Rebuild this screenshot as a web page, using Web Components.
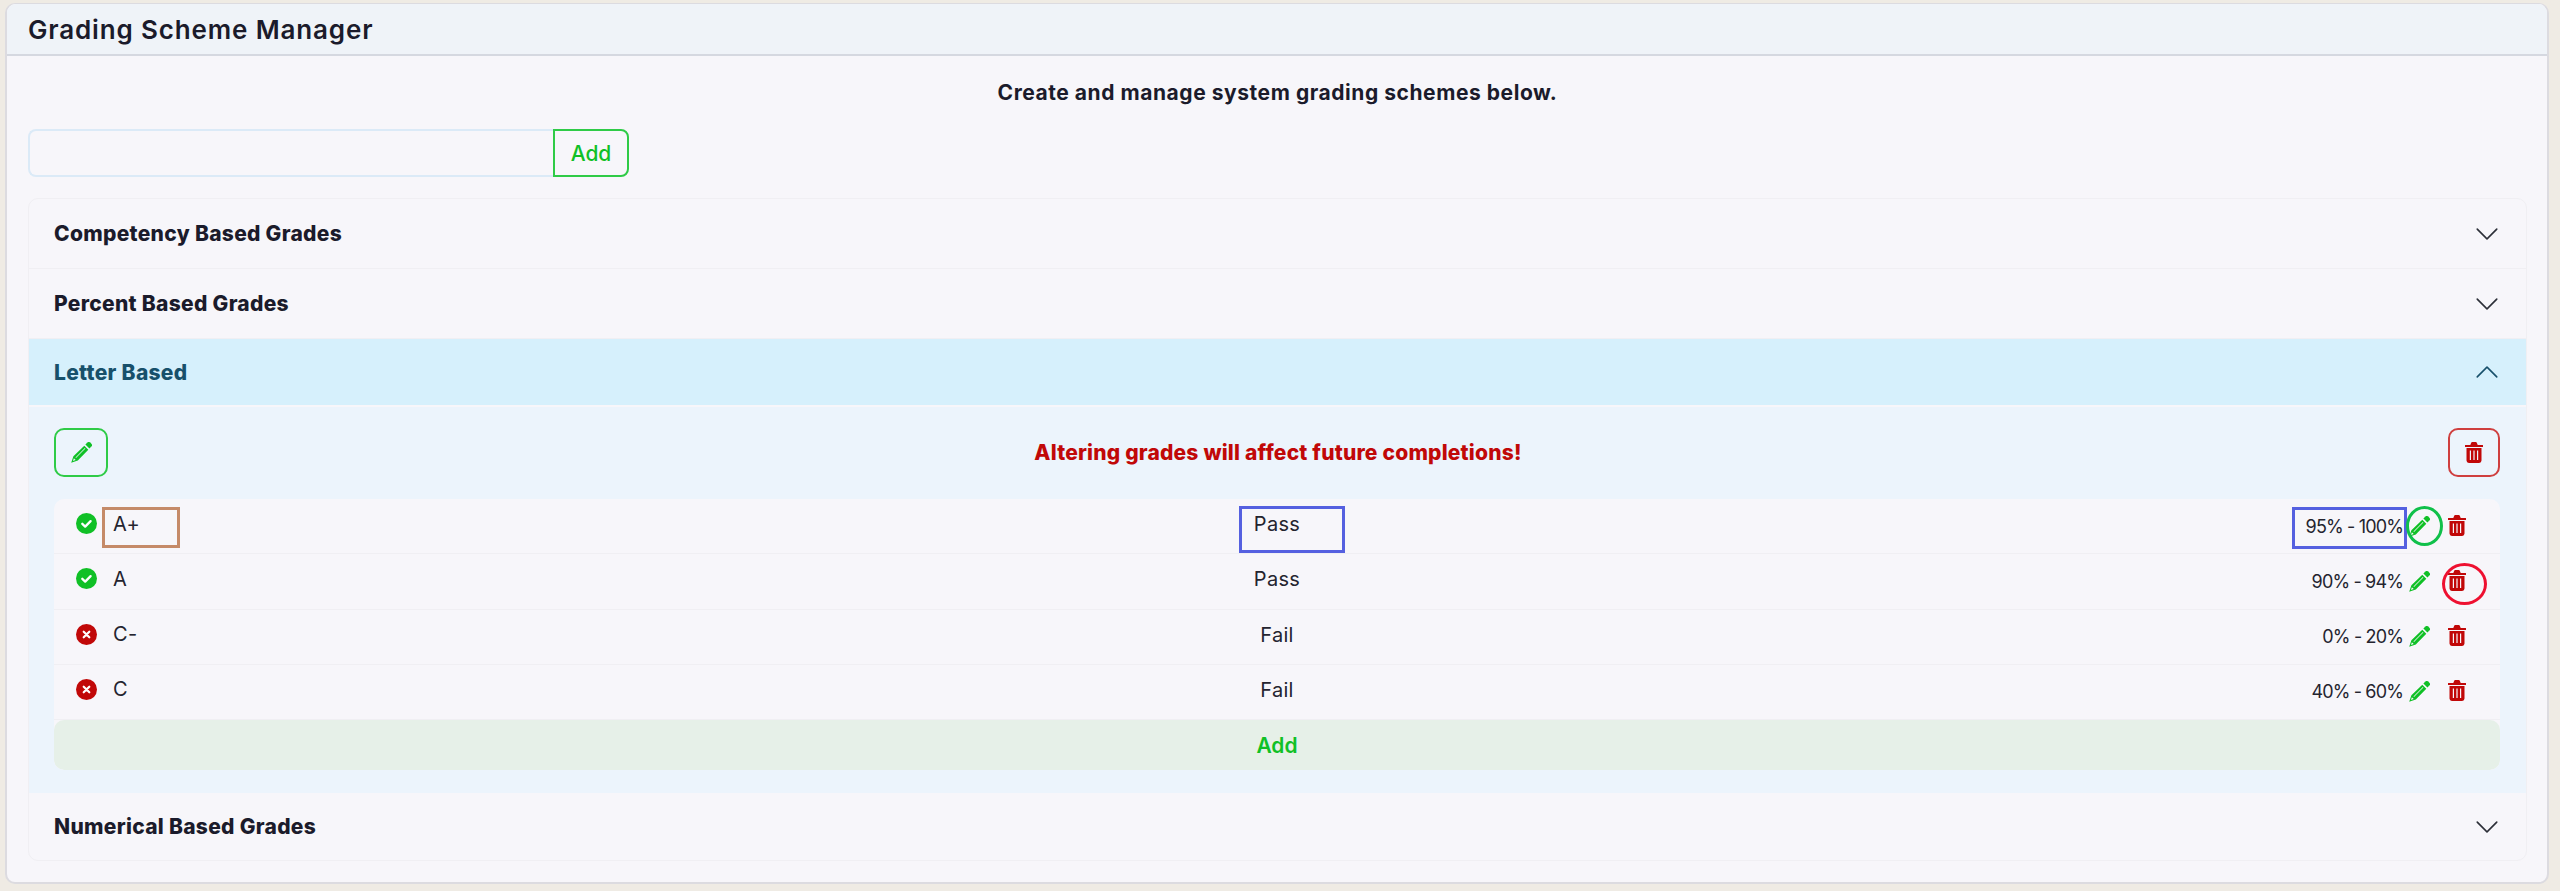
<!DOCTYPE html>
<html lang="en">
<head>
<meta charset="utf-8">
<title>Grading Scheme Manager</title>
<style>
  html, body { margin: 0; height: 100%; }
  body { background: #efebe4; font-family: Inter, "Liberation Sans", sans-serif; color: #1b1b2b; }
</style>
</head>
<body>
<grading-manager heading="Grading Scheme Manager" intro="Create and manage system grading schemes below.">
  <scheme-accordion>
    <scheme-item label="Competency Based Grades"></scheme-item>
    <scheme-item label="Percent Based Grades"></scheme-item>
    <scheme-item label="Letter Based" open warning="Altering grades will affect future completions!">
      <grade-row symbol="A+" status="Pass" range="95% - 100%" marks="symbol status range edit"></grade-row>
      <grade-row symbol="A" status="Pass" range="90% - 94%" marks="remove"></grade-row>
      <grade-row symbol="C-" status="Fail" range="0% - 20%"></grade-row>
      <grade-row symbol="C" status="Fail" range="40% - 60%"></grade-row>
    </scheme-item>
    <scheme-item label="Numerical Based Grades" last></scheme-item>
  </scheme-accordion>
</grading-manager>

<script>
const ICONS = {
  pencil: `<svg viewBox="0 0 21 21" width="21" height="21" fill="currentColor"><path d="M14.4 2.600 16.400.6a2 2 0 0 1 2.800 0l1.200 1.200a2 2 0 0 1 0 2.800l-2 2z"/><path fill-rule="evenodd" d="M13.300 3.700l4 4L6.800 18.600.2 20.800l2.200-6.600zM13.900 6 4.500 15.400l.5.500 9.400-9.400zM2.900 16.300l-1 2.800 2.800-1z"/></svg>`,
  trash: `<svg viewBox="0 0 18 21" width="18" height="21" fill="currentColor"><path d="M.3 3h5l1-2.4A1 1 0 0 1 7.200 0h3.600a1 1 0 0 1 .9.6l1 2.400h5a.3.3 0 0 1 .3.300V5H0V3.300A.3.300 0 0 1 .3 3z"/><path fill-rule="evenodd" d="M1.500 6h15v12.600a2.400 2.400 0 0 1-2.400 2.400H3.900a2.400 2.400 0 0 1-2.400-2.400zM4.800 8.500v9.500h1.200V8.500zM8.400 8.500v9.500h1.200V8.500zM12 8.500v9.500h1.200V8.500z"/></svg>`,
  check: `<svg viewBox="0 0 21 21" width="21" height="21"><circle cx="10.500" cy="10.500" r="10.500" fill="#10c026"/><path d="M6.300 10.800l2.900 2.800 5.400-5.500" fill="none" stroke="#fff" stroke-width="2.300" stroke-linecap="round" stroke-linejoin="round"/></svg>`,
  cross: `<svg viewBox="0 0 21 21" width="21" height="21"><circle cx="10.500" cy="10.500" r="10.500" fill="#c10808"/><path d="M7.700 7.700l5.600 5.600M13.300 7.700l-5.600 5.600" fill="none" stroke="#fff" stroke-width="2.200" stroke-linecap="round"/></svg>`,
  down: `<svg viewBox="0 0 16 16" width="26" height="26" fill="currentColor"><path fill-rule="evenodd" d="M1.646 4.646a.5.5 0 0 1 .708 0L8 10.293l5.646-5.647a.5.5 0 0 1 .708.708l-6 6a.5.5 0 0 1-.708 0l-6-6a.5.5 0 0 1 0-.708z"/></svg>`,
  up: `<svg viewBox="0 0 16 16" width="26" height="26" fill="currentColor" style="transform:rotate(180deg)"><path fill-rule="evenodd" d="M1.646 4.646a.5.5 0 0 1 .708 0L8 10.293l5.646-5.647a.5.5 0 0 1 .708.708l-6 6a.5.5 0 0 1-.708 0l-6-6a.5.5 0 0 1 0-.708z"/></svg>`
}

class GradingManager extends HTMLElement{
  constructor(){
    super()
    const shadow = this.attachShadow({ mode: "open" });
    shadow.innerHTML = `
      <style>
        :host { display: block; margin: 3px 11px 0 5px; background: #f7f6fa; border: 1px solid #dcdbe0; border-width: 1px 2px 2px 2px; border-radius: 10px; }
        header { height: 50px; padding-left: 21px; display: flex; align-items: center; background: #eff3f8; border-bottom: 2px solid #d5d8e0; border-radius: 9px 9px 0 0; font-size: 26px; font-weight: 600; letter-spacing: 0.85px; }
        main { padding: 0 20px 21px 21px; }
        p { margin: 0; height: 73px; display: flex; align-items: center; justify-content: center; font-size: 21px; font-weight: 700; letter-spacing: 0.55px; }
        form { display: flex; margin-bottom: 21px; }
        input { box-sizing: border-box; width: 525px; height: 48px; background: #f7f6fa; border: 2px solid #dbeaf7; border-right: none; border-radius: 8px 0 0 8px; outline: none; }
        button { box-sizing: border-box; width: 76px; height: 48px; padding: 0; background: transparent; border: 2px solid #2fcb47; border-radius: 0 8px 8px 0; color: #10c026; font: 500 21px Inter, "Liberation Sans", sans-serif; }
      </style>
      <header>${this.getAttribute('heading')}</header>
      <main>
        <p>${this.getAttribute('intro')}</p>
        <form><input type="text" aria-label="Scheme name"><button type="button">Add</button></form>
        <slot></slot>
      </main>
    `
  }
}
customElements.define('grading-manager', GradingManager)

class SchemeAccordion extends HTMLElement{
  constructor(){
    super()
    const shadow = this.attachShadow({ mode: "open" });
    shadow.innerHTML = `
      <style>
        :host { display: block; border: 1px solid #f0eff3; border-radius: 10px; overflow: hidden; }
      </style>
      <slot></slot>
    `
  }
}
customElements.define('scheme-accordion', SchemeAccordion)

class SchemeItem extends HTMLElement{
  constructor(){
    super()
    const shadow = this.attachShadow({ mode: "open" });
    const open = this.hasAttribute('open')
    const last = this.hasAttribute('last')
    shadow.innerHTML = `
      <style>
        :host { display: block; }
        .head { box-sizing: border-box; height: ${open ? 66 : last ? 67 : 70}px; padding: 0 26px 0 25px; display: flex; align-items: center; justify-content: space-between; font-size: 21px; font-weight: 800; letter-spacing: 0.3px; color: #1b1b2b; border-bottom: ${open || last ? 0 : 1}px solid #f0eff3; }
        .head svg { display: block; color: #2c2f38; }
        .head.open { background: #d6f0fc; color: #17506b; margin-bottom: 2px; }
        .head.open svg { color: #17506b; }
        .body { background: #ecf4fc; padding: 21px 26px 23px 25px; }
        .tools { display: flex; align-items: center; justify-content: space-between; margin-bottom: 22px; }
        .tool { box-sizing: border-box; height: 49px; display: flex; align-items: center; justify-content: center; border-radius: 10px; background: transparent; padding: 0; }
        .tool.edit { width: 54px; border: 2px solid #2fcb47; color: #10c026; }
        .tool.remove { width: 52px; border: 2px solid #cf3f3f; color: #c10808; }
        .warn { font-size: 21px; font-weight: 800; letter-spacing: 0.2px; color: #c10808; }
        .list { border-radius: 10px; overflow: hidden; background: #f7f6fa; }
        .add { height: 50px; display: flex; align-items: center; justify-content: center; background: #e6f0e8; color: #10c026; font-size: 21px; font-weight: 600; border-radius: 10px; }
      </style>
      <div class="head ${open ? 'open' : ''}">
        <span>${this.getAttribute('label')}</span>
        ${open ? ICONS.up : ICONS.down}
      </div>
      ${open ? `
      <div class="body">
        <div class="tools">
          <div class="tool edit">${ICONS.pencil}</div>
          <span class="warn">${this.getAttribute('warning')}</span>
          <div class="tool remove">${ICONS.trash}</div>
        </div>
        <div class="list">
          <slot></slot>
          <div class="add">Add</div>
        </div>
      </div>` : ''}
    `
  }
}
customElements.define('scheme-item', SchemeItem)

class GradeRow extends HTMLElement{
  constructor(){
    super()
    const shadow = this.attachShadow({ mode: "open" });
    const passed = this.getAttribute('status') === 'Pass'
    const marks = (this.getAttribute('marks') || '').split(' ').filter(Boolean)
    shadow.innerHTML = `
      <style>
        :host { display: block; }
        .row { position: relative; box-sizing: border-box; height: 55.25px; display: grid; grid-template-columns: 1fr auto 1fr; align-items: center; border-bottom: 1px solid #f0eff3; font-size: 20px; letter-spacing: 0.3px; color: #24242f; }
        .left { display: flex; align-items: center; padding: 0 0 5px 22px; gap: 16px; }
        .left svg, .right svg { display: block; }
        .status { position: relative; top: -2px; }
        .right { display: flex; align-items: center; justify-content: flex-end; font-size: 18px; letter-spacing: -0.85px; padding-right: 34px; }
        .pen { color: #10c026; margin: 0 18px 0 6px; }
        .bin { color: #c10808; padding-bottom: 2px; }
        /* review marks drawn over the row */
        .mark { position: absolute; box-sizing: border-box; border: 3px solid; }
        .mark.symbol { left: 48px; top: 8px; width: 78px; height: 41px; border-color: #c58a68; }
        .mark.status { left: 1185px; top: 7px; width: 106px; height: 47px; border-color: #5560e0; }
        .mark.range { right: 93px; top: 8px; width: 115px; height: 42px; border-color: #5560e0; }
        .mark.edit { right: 57px; top: 7px; width: 37px; height: 40px; border-radius: 50%; border-color: #10c04a; }
        .mark.remove { right: 13px; top: 9px; width: 45px; height: 42px; border-radius: 50%; border-color: #ee1030; }
      </style>
      <div class="row">
        <div class="left">${passed ? ICONS.check : ICONS.cross}<span>${this.getAttribute('symbol')}</span></div>
        <div class="status">${this.getAttribute('status')}</div>
        <div class="right">
          <span>${this.getAttribute('range')}</span>
          <span class="pen">${ICONS.pencil}</span>
          <span class="bin">${ICONS.trash}</span>
        </div>
        ${marks.map(m => `<div class="mark ${m}"></div>`).join('')}
      </div>
    `
  }
}
customElements.define('grade-row', GradeRow)
</script>
</body>
</html>
